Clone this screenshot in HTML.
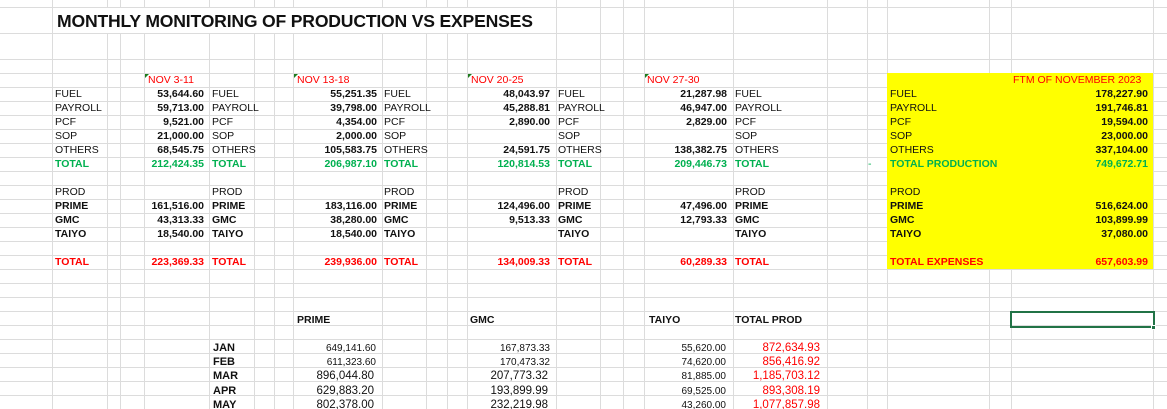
<!DOCTYPE html>
<html><head><meta charset="utf-8"><style>
*{margin:0;padding:0;box-sizing:border-box}
html,body{width:1167px;height:409px;overflow:hidden;background:#fff;position:relative;font-family:"Liberation Sans",Arial,sans-serif;font-size:10.5px;color:#111}
.grid{position:absolute;left:0;top:60px;width:1167px;height:349px;background:repeating-linear-gradient(to bottom,transparent 0 13px,#dcdcdc 13px 14px)}
.h{position:absolute;left:0;width:1167px;height:1px;background:#dcdcdc}
.v{position:absolute;top:0;width:1px;height:409px;background:#dcdcdc}
.t{position:absolute;height:14px;line-height:15px;white-space:nowrap}
.r{text-align:right}
.b{font-weight:bold}
.g{color:#00b050}
.red{color:#ff0000}
.tri{position:absolute;width:0;height:0;border-top:4px solid #1e7b1e;border-right:4px solid transparent}
</style></head><body>
<div class="grid"></div>
<div class="h" style="top:7px"></div>
<div class="h" style="top:33px"></div>
<div class="h" style="top:59px"></div>
<div class="v" style="left:52px"></div><div class="v" style="left:107px"></div><div class="v" style="left:120px"></div><div class="v" style="left:144px"></div><div class="v" style="left:209px"></div><div class="v" style="left:254px"></div><div class="v" style="left:274px"></div><div class="v" style="left:293px"></div><div class="v" style="left:382px"></div><div class="v" style="left:426px"></div><div class="v" style="left:447px"></div><div class="v" style="left:467px"></div><div class="v" style="left:556px"></div><div class="v" style="left:600px"></div><div class="v" style="left:623px"></div><div class="v" style="left:644px"></div><div class="v" style="left:733px"></div><div class="v" style="left:827px"></div><div class="v" style="left:867px"></div><div class="v" style="left:887px"></div><div class="v" style="left:989px"></div><div class="v" style="left:1011px"></div><div class="v" style="left:1153px"></div>
<div style="position:absolute;left:53px;top:8px;width:502px;height:25px;background:#fff"></div>
<div style="position:absolute;left:57px;top:8px;height:25px;line-height:26px;font-size:17.6px;font-weight:bold;color:#111;letter-spacing:-0.2px">MONTHLY MONITORING OF PRODUCTION VS EXPENSES</div>
<div style="position:absolute;left:887px;top:73px;width:266px;height:196px;background:#ffff00"></div>

<div class="tri" style="left:145px;top:74px"></div><div class="t red" style="left:148px;top:73px">NOV 3-11</div>
<div class="tri" style="left:294px;top:74px"></div><div class="t red" style="left:297px;top:73px">NOV 13-18</div>
<div class="tri" style="left:468px;top:74px"></div><div class="t red" style="left:471px;top:73px">NOV 20-25</div>
<div class="tri" style="left:645px;top:74px"></div><div class="t red" style="left:647px;top:73px">NOV 27-30</div>
<div class="t red" style="left:1013px;top:73px">FTM OF NOVEMBER 2023</div>

<div class="t" style="left:55px;top:87px">FUEL</div><div class="t" style="left:55px;top:101px">PAYROLL</div><div class="t" style="left:55px;top:115px">PCF</div><div class="t" style="left:55px;top:129px">SOP</div><div class="t" style="left:55px;top:143px">OTHERS</div><div class="t g b" style="left:55px;top:157px">TOTAL</div>
<div class="t" style="left:55px;top:185px">PROD</div><div class="t b" style="left:55px;top:199px">PRIME</div><div class="t b" style="left:55px;top:213px">GMC</div><div class="t b" style="left:55px;top:227px">TAIYO</div><div class="t red b" style="left:55px;top:255px">TOTAL</div>

<div class="t" style="left:212px;top:87px">FUEL</div><div class="t" style="left:212px;top:101px">PAYROLL</div><div class="t" style="left:212px;top:115px">PCF</div><div class="t" style="left:212px;top:129px">SOP</div><div class="t" style="left:212px;top:143px">OTHERS</div><div class="t g b" style="left:212px;top:157px">TOTAL</div>
<div class="t" style="left:212px;top:185px">PROD</div><div class="t b" style="left:212px;top:199px">PRIME</div><div class="t b" style="left:212px;top:213px">GMC</div><div class="t b" style="left:212px;top:227px">TAIYO</div><div class="t red b" style="left:212px;top:255px">TOTAL</div>

<div class="t" style="left:384px;top:87px">FUEL</div><div class="t" style="left:384px;top:101px">PAYROLL</div><div class="t" style="left:384px;top:115px">PCF</div><div class="t" style="left:384px;top:129px">SOP</div><div class="t" style="left:384px;top:143px">OTHERS</div><div class="t g b" style="left:384px;top:157px">TOTAL</div>
<div class="t" style="left:384px;top:185px">PROD</div><div class="t b" style="left:384px;top:199px">PRIME</div><div class="t b" style="left:384px;top:213px">GMC</div><div class="t b" style="left:384px;top:227px">TAIYO</div><div class="t red b" style="left:384px;top:255px">TOTAL</div>

<div class="t" style="left:558px;top:87px">FUEL</div><div class="t" style="left:558px;top:101px">PAYROLL</div><div class="t" style="left:558px;top:115px">PCF</div><div class="t" style="left:558px;top:129px">SOP</div><div class="t" style="left:558px;top:143px">OTHERS</div><div class="t g b" style="left:558px;top:157px">TOTAL</div>
<div class="t" style="left:558px;top:185px">PROD</div><div class="t b" style="left:558px;top:199px">PRIME</div><div class="t b" style="left:558px;top:213px">GMC</div><div class="t b" style="left:558px;top:227px">TAIYO</div><div class="t red b" style="left:558px;top:255px">TOTAL</div>

<div class="t" style="left:735px;top:87px">FUEL</div><div class="t" style="left:735px;top:101px">PAYROLL</div><div class="t" style="left:735px;top:115px">PCF</div><div class="t" style="left:735px;top:129px">SOP</div><div class="t" style="left:735px;top:143px">OTHERS</div><div class="t g b" style="left:735px;top:157px">TOTAL</div>
<div class="t" style="left:735px;top:185px">PROD</div><div class="t b" style="left:735px;top:199px">PRIME</div><div class="t b" style="left:735px;top:213px">GMC</div><div class="t b" style="left:735px;top:227px">TAIYO</div><div class="t red b" style="left:735px;top:255px">TOTAL</div>

<div class="t" style="left:890px;top:87px">FUEL</div><div class="t" style="left:890px;top:101px">PAYROLL</div><div class="t" style="left:890px;top:115px">PCF</div><div class="t" style="left:890px;top:129px">SOP</div><div class="t" style="left:890px;top:143px">OTHERS</div><div class="t g b" style="left:890px;top:157px">TOTAL PRODUCTION</div>
<div class="t" style="left:890px;top:185px">PROD</div><div class="t b" style="left:890px;top:199px">PRIME</div><div class="t b" style="left:890px;top:213px">GMC</div><div class="t b" style="left:890px;top:227px">TAIYO</div><div class="t red b" style="left:890px;top:255px">TOTAL EXPENSES</div>
<div class="t g" style="left:868px;top:157px">-</div>

<div class="t r b" style="right:963px;top:87px">53,644.60</div><div class="t r b" style="right:963px;top:101px">59,713.00</div><div class="t r b" style="right:963px;top:115px">9,521.00</div><div class="t r b" style="right:963px;top:129px">21,000.00</div><div class="t r b" style="right:963px;top:143px">68,545.75</div><div class="t r b g" style="right:963px;top:157px">212,424.35</div>
<div class="t r b" style="right:963px;top:199px">161,516.00</div><div class="t r b" style="right:963px;top:213px">43,313.33</div><div class="t r b" style="right:963px;top:227px">18,540.00</div><div class="t r b red" style="right:963px;top:255px">223,369.33</div>
<div class="t r b" style="right:790px;top:87px">55,251.35</div><div class="t r b" style="right:790px;top:101px">39,798.00</div><div class="t r b" style="right:790px;top:115px">4,354.00</div><div class="t r b" style="right:790px;top:129px">2,000.00</div><div class="t r b" style="right:790px;top:143px">105,583.75</div><div class="t r b g" style="right:790px;top:157px">206,987.10</div>
<div class="t r b" style="right:790px;top:199px">183,116.00</div><div class="t r b" style="right:790px;top:213px">38,280.00</div><div class="t r b" style="right:790px;top:227px">18,540.00</div><div class="t r b red" style="right:790px;top:255px">239,936.00</div>
<div class="t r b" style="right:617px;top:87px">48,043.97</div><div class="t r b" style="right:617px;top:101px">45,288.81</div><div class="t r b" style="right:617px;top:115px">2,890.00</div><div class="t r b" style="right:617px;top:143px">24,591.75</div><div class="t r b g" style="right:617px;top:157px">120,814.53</div>
<div class="t r b" style="right:617px;top:199px">124,496.00</div><div class="t r b" style="right:617px;top:213px">9,513.33</div><div class="t r b red" style="right:617px;top:255px">134,009.33</div>
<div class="t r b" style="right:440px;top:87px">21,287.98</div><div class="t r b" style="right:440px;top:101px">46,947.00</div><div class="t r b" style="right:440px;top:115px">2,829.00</div><div class="t r b" style="right:440px;top:143px">138,382.75</div><div class="t r b g" style="right:440px;top:157px">209,446.73</div>
<div class="t r b" style="right:440px;top:199px">47,496.00</div><div class="t r b" style="right:440px;top:213px">12,793.33</div><div class="t r b red" style="right:440px;top:255px">60,289.33</div>
<div class="t r b" style="right:19px;top:87px">178,227.90</div><div class="t r b" style="right:19px;top:101px">191,746.81</div><div class="t r b" style="right:19px;top:115px">19,594.00</div><div class="t r b" style="right:19px;top:129px">23,000.00</div><div class="t r b" style="right:19px;top:143px">337,104.00</div><div class="t r b g" style="right:19px;top:157px">749,672.71</div>
<div class="t r b" style="right:19px;top:199px">516,624.00</div><div class="t r b" style="right:19px;top:213px">103,899.99</div><div class="t r b" style="right:19px;top:227px">37,080.00</div><div class="t r b red" style="right:19px;top:255px">657,603.99</div>

<div class="t b" style="left:297px;top:313px">PRIME</div>
<div class="t b" style="left:470px;top:313px">GMC</div>
<div class="t b" style="left:649px;top:313px">TAIYO</div>
<div class="t b" style="left:735px;top:313px">TOTAL PROD</div>

<div class="t b" style="left:213px;top:341px;font-size:11px">JAN</div>
<div class="t b" style="left:213px;top:355px;font-size:11px">FEB</div>
<div class="t b" style="left:213px;top:369px;font-size:11px">MAR</div>
<div class="t b" style="left:213px;top:384px;font-size:11px">APR</div>
<div class="t b" style="left:213px;top:398px;font-size:11px">MAY</div>

<div class="t r" style="right:791px;top:341px;font-size:10px">649,141.60</div>
<div class="t r" style="right:791px;top:355px;font-size:10px">611,323.60</div>
<div class="t r" style="right:793px;top:369px;font-size:11.5px">896,044.80</div>
<div class="t r" style="right:793px;top:384px;font-size:11.5px">629,883.20</div>
<div class="t r" style="right:793px;top:398px;font-size:11.5px">802,378.00</div>

<div class="t r" style="right:617px;top:341px;font-size:10px">167,873.33</div>
<div class="t r" style="right:617px;top:355px;font-size:10px">170,473.32</div>
<div class="t r" style="right:619px;top:369px;font-size:11.5px">207,773.32</div>
<div class="t r" style="right:619px;top:384px;font-size:11.5px">193,899.99</div>
<div class="t r" style="right:619px;top:398px;font-size:11.5px">232,219.98</div>

<div class="t r" style="right:441px;top:341px;font-size:10px">55,620.00</div>
<div class="t r" style="right:441px;top:355px;font-size:10px">74,620.00</div>
<div class="t r" style="right:441px;top:369px;font-size:10px">81,885.00</div>
<div class="t r" style="right:441px;top:384px;font-size:10px">69,525.00</div>
<div class="t r" style="right:441px;top:398px;font-size:10px">43,260.00</div>

<div class="t r red" style="right:347px;top:341px;font-size:11.5px">872,634.93</div>
<div class="t r red" style="right:347px;top:355px;font-size:11.5px">856,416.92</div>
<div class="t r red" style="right:347px;top:369px;font-size:11.5px">1,185,703.12</div>
<div class="t r red" style="right:347px;top:384px;font-size:11.5px">893,308.19</div>
<div class="t r red" style="right:347px;top:398px;font-size:11.5px">1,077,857.98</div>

<div style="position:absolute;left:1010px;top:311px;width:145px;height:17px;border:2px solid #217346"></div>
<div style="position:absolute;left:1151px;top:325px;width:5px;height:5px;background:#217346;border:1px solid #fff"></div>
</body></html>
